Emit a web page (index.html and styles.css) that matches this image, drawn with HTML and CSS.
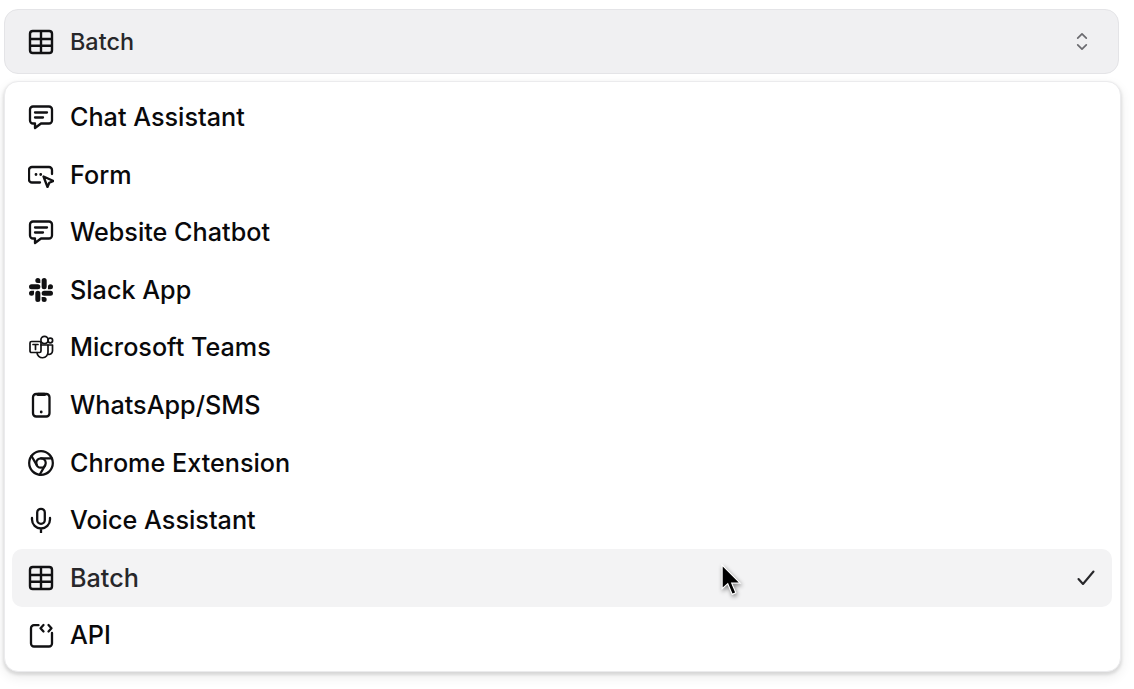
FILE: index.html
```html
<!DOCTYPE html>
<html lang="en">
<head>
    <meta charset="UTF-8">
    <title>App type select</title>
    <link rel="stylesheet" href="styles.css">
</head>
<body>
    <div class="select">
        <button class="trigger">
            <svg class="icon table" viewBox="0 0 26 26"><rect x="2" y="2" width="22" height="22" rx="2.8"/><path d="M13 2v22M2 10h22M2 16.7h22"/></svg>
            <span class="trigger-label">Batch</span>
            <svg class="updown" viewBox="0 0 14 22"><path d="M2 7l5-5 5 5M2 15l5 5 5-5"/></svg>
        </button>

        <ul class="menu">
            <li class="item">
                <svg class="icon" viewBox="0 0 26 26"><path d="M5 2.5h16a3 3 0 0 1 3 3v11a3 3 0 0 1-3 3h-8l-6 4.5v-4.5H5a3 3 0 0 1-3-3v-11a3 3 0 0 1 3-3z"/><path d="M7 8.5h12M7 13.5h8"/></svg>
                Chat Assistant
            </li>
            <li class="item">
                <svg class="icon" viewBox="0 0 26 26"><path d="M12 20.5H4a3 3 0 0 1-3-3V8a3 3 0 0 1 3-3h17a3 3 0 0 1 3 3v4"/><path d="M15.5 14.5l10 4.5-4.2 1.8-1.8 4.2z"/><path class="dots" d="M8 12.5h.01M12.7 12.5h.01"/></svg>
                Form
            </li>
            <li class="item">
                <svg class="icon" viewBox="0 0 26 26"><path d="M5 2.5h16a3 3 0 0 1 3 3v11a3 3 0 0 1-3 3h-8l-6 4.5v-4.5H5a3 3 0 0 1-3-3v-11a3 3 0 0 1 3-3z"/><path d="M7 8.5h12M7 13.5h8"/></svg>
                Website Chatbot
            </li>
            <li class="item">
                <svg class="icon solid" viewBox="-1 -1 26 26"><path d="M5.042 15.165a2.528 2.528 0 0 1-2.52 2.523A2.528 2.528 0 0 1 0 15.165a2.527 2.527 0 0 1 2.522-2.52h2.52v2.52zM6.313 15.165a2.527 2.527 0 0 1 2.521-2.52 2.527 2.527 0 0 1 2.521 2.52v6.313A2.528 2.528 0 0 1 8.834 24a2.528 2.528 0 0 1-2.521-2.522v-6.313zM8.834 5.042a2.528 2.528 0 0 1-2.521-2.52A2.528 2.528 0 0 1 8.834 0a2.528 2.528 0 0 1 2.521 2.522v2.52H8.834zM8.834 6.313a2.528 2.528 0 0 1 2.521 2.521 2.528 2.528 0 0 1-2.521 2.521H2.522A2.528 2.528 0 0 1 0 8.834a2.528 2.528 0 0 1 2.522-2.521h6.312zM18.956 8.834a2.528 2.528 0 0 1 2.522-2.521A2.528 2.528 0 0 1 24 8.834a2.528 2.528 0 0 1-2.522 2.521h-2.522V8.834zM17.688 8.834a2.528 2.528 0 0 1-2.523 2.521 2.527 2.527 0 0 1-2.52-2.521V2.522A2.527 2.527 0 0 1 15.165 0a2.528 2.528 0 0 1 2.523 2.522v6.312zM15.165 18.956a2.528 2.528 0 0 1 2.523 2.522A2.528 2.528 0 0 1 15.165 24a2.527 2.527 0 0 1-2.52-2.522v-2.522h2.52zM15.165 17.688a2.527 2.527 0 0 1-2.52-2.523 2.526 2.526 0 0 1 2.52-2.52h6.313A2.527 2.527 0 0 1 24 15.165a2.528 2.528 0 0 1-2.522 2.523h-6.313z"/></svg>
                Slack App
            </li>
            <li class="item">
                <svg class="icon thin" viewBox="0 0 26 26"><rect x="2" y="7.5" width="11" height="11" rx="1.5"/><path d="M5 10.5h5M7.5 10.5v5"/><circle cx="16.5" cy="6" r="3.6"/><circle cx="22.3" cy="6.5" r="2.3"/><path d="M9 18.5a5.5 5.5 0 0 0 11-.5v-7h-7"/><path d="M20 11h4.5v6a3.5 3.5 0 0 1-4.5 3.2"/></svg>
                Microsoft Teams
            </li>
            <li class="item">
                <svg class="icon" viewBox="0 0 26 26"><rect x="5" y="2" width="16.5" height="22.5" rx="3.2"/><path class="notch" d="M10 2.4h6.5"/><path class="dots" d="M13.2 20h.01"/></svg>
                WhatsApp/SMS
            </li>
            <li class="item">
                <svg class="icon chrome" viewBox="1 1 22 22"><circle cx="12" cy="12" r="10"/><circle cx="12" cy="12" r="4"/><path d="M21.17 8H12M3.95 6.06L8.54 14M10.88 21.94L15.46 14"/></svg>
                Chrome Extension
            </li>
            <li class="item">
                <svg class="icon" viewBox="0 0 26 26"><rect x="9.2" y="1.8" width="7.6" height="15" rx="3.8"/><path d="M4 11v1.5a9 9 0 0 0 18 0V11M13 21.5v4"/></svg>
                Voice Assistant
            </li>
            <li class="item selected">
                <svg class="icon table" viewBox="0 0 26 26"><rect x="2" y="2" width="22" height="22" rx="2.8"/><path d="M13 2v22M2 10h22M2 16.7h22"/></svg>
                Batch
                <svg class="check" viewBox="0 0 18 16"><path d="M1.5 9l4.5 5L16.5 1.5"/></svg>
                <svg class="cursor" viewBox="0 0 20 30"><path d="M1 1v21l5-4.5L10 27l3.2-1.5-3.7-8.5H17z"/></svg>
            </li>
            <li class="item">
                <svg class="icon" viewBox="0 0 26 26"><path d="M10.5 3.2H6a3 3 0 0 0-3 3v15.3a3 3 0 0 0 3 3h15a3 3 0 0 0 3-3V11"/><path d="M15.5 3l-3 3.2 3 3.3M20.5 3l3 3.2-3 3.3"/></svg>
                API
            </li>
        </ul>
    </div>
</body>
</html>
```

FILE: styles.css
```css
body{
    margin: 0;
    min-height: 100vh;
    background: #fff;
    font-family: "Inter", "Liberation Sans", sans-serif;
}

.select{
    display: flex;
    flex-direction: column;
    align-items: flex-start;
    gap: 7px;
    padding: 9px 0 0 4px;
}

.trigger{
    display: flex;
    align-items: center;
    gap: 16px;
    width: 1115px;
    height: 65px;
    padding: 0 30px 0 23px;
    box-sizing: border-box;
    background: #f0f0f2;
    border: 1px solid #e4e4e7;
    border-radius: 14px;
    font: inherit;
    font-size: 23.4px;
    font-weight: 500;
    color: #27272a;
}

.trigger-label{
    flex: 1;
    text-align: left;
}

.menu{
    list-style: none;
    margin: 0;
    width: 1117px;
    height: 591px;
    padding: 6.2px 8px 0 7px;
    box-sizing: border-box;
    background: #fff;
    border: 1px solid #ebebed;
    border-radius: 14px;
    box-shadow: 0 2px 3px 1px rgba(0,0,0,.1), 0 5px 12px 1px rgba(0,0,0,.07);
}

.item{
    position: relative;
    display: flex;
    align-items: center;
    gap: 16px;
    height: 57.6px;
    padding: 0 17px 0 16px;
    border-radius: 10px;
    font-size: 25.2px;
    font-weight: 500;
    color: #09090b;
}

.item.selected{
    background: #f3f3f4;
    color: #27272a;
}

.icon{
    flex: none;
    width: 26px;
    height: 26px;
    fill: none;
    stroke: #111113;
    stroke-width: 2.3;
    stroke-linecap: round;
    stroke-linejoin: round;
}

.icon.table{
    stroke-width: 2.4;
    stroke-linecap: butt;
}

.icon.solid{
    fill: #111113;
    stroke: none;
}

.icon.thin{
    stroke-width: 1.7;
}

.icon.chrome{
    stroke-width: 1.9;
}

.icon .dots{
    stroke-width: 2.8;
}

.icon .notch{
    stroke-width: 3.2;
}

.updown{
    flex: none;
    width: 12px;
    height: 19px;
    fill: none;
    stroke: #6b6b70;
    stroke-width: 2;
    stroke-linecap: round;
    stroke-linejoin: round;
}

.check{
    flex: none;
    width: 18px;
    height: 16px;
    margin-left: auto;
    fill: none;
    stroke: #27272a;
    stroke-width: 2.1;
    stroke-linecap: round;
    stroke-linejoin: round;
}

/* mouse pointer, sits on top of the row */
.cursor{
    position: absolute;
    left: 709px;
    top: 15px;
    width: 22.5px;
    height: 33.75px;
    fill: #000;
    stroke: #fff;
    stroke-width: 1;
    filter: drop-shadow(1px 2px 2px rgba(0,0,0,.45));
}
```
